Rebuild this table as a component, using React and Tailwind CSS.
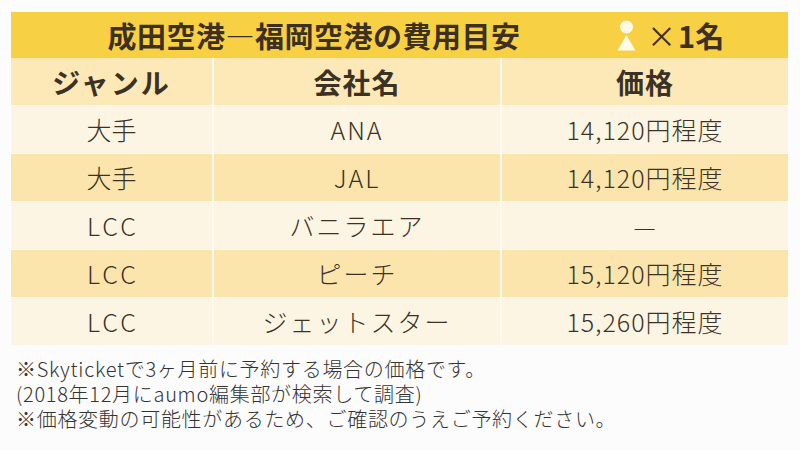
const rows = [
  { genre: '大手', company: 'ANA', price: '14,120円程度' },
  { genre: '大手', company: 'JAL', price: '14,120円程度' },
  { genre: 'LCC', company: 'バニラエア', price: '—' },
  { genre: 'LCC', company: 'ピーチ', price: '15,120円程度' },
  { genre: 'LCC', company: 'ジェットスター', price: '15,260円程度' },
];

const notes = [
  '※Skyticketで3ヶ月前に予約する場合の価格です。',
  '(2018年12月にaumo編集部が検索して調査)',
  '※価格変動の可能性があるため、ご確認のうえご予約ください。',
];

const PersonIcon = () => (
  <svg width="20" height="32" viewBox="0 0 20 32">
    <circle cx="9.5" cy="7" r="6.5" fill="#fff9e6" />
    <path d="M9.5 15 L18.5 30.5 L0.5 30.5 Z" fill="#fffbea" />
  </svg>
);

const App = () => {
  return (
    <div
      className="w-[800px] h-[450px] bg-[#fdfcfd] overflow-hidden pt-[12px]"
      style={{ fontFamily: '"Noto Sans CJK JP", "Noto Sans", sans-serif' }}
    >
      <div className="mx-[11px] w-[777px]">
        {/* title bar */}
        <div className="h-[46px] bg-[#f8d044] flex items-center text-[#3d3020]">
          <div className="flex-1 text-center font-bold text-[29px] tracking-[0.5px] leading-none">
            成田空港―福岡空港の費用目安
          </div>
          <div className="w-[171px] flex items-center">
            <div className="mt-[2px]">
              <PersonIcon />
            </div>
            <span className="ml-[10px] text-[29px] leading-none font-normal">×</span>
            <span className="ml-[2px] text-[29px] leading-none font-bold">1名</span>
          </div>
        </div>

        {/* table */}
        <div className="grid grid-cols-[201px_1fr_1fr] gap-x-[2px] gap-y-[1px] bg-[#fffaf0] text-[#3b3225]">
          <div className="h-[47px] bg-[#fde9b7] flex items-center justify-center font-bold text-[28px] tracking-[2px]">ジャンル</div>
          <div className="h-[47px] bg-[#fde9b7] flex items-center justify-center font-bold text-[28px] tracking-[1px]">会社名</div>
          <div className="h-[47px] bg-[#fde9b7] flex items-center justify-center font-bold text-[28px] tracking-[1px]">価格</div>
          {rows.map((r, i) => {
            const bg = i % 2 === 0 ? 'bg-[#fdf5e4]' : 'bg-[#fce5ad]';
            const genreTrack = r.genre === 'LCC' ? 'tracking-[3px] pl-[3px]' : '';
            return [
              <div key={`g${i}`} className={`h-[47px] ${bg} flex items-center justify-center text-[25px] font-light ${genreTrack}`}>{r.genre}</div>,
              <div key={`c${i}`} className={`h-[47px] ${bg} flex items-center justify-center text-[25px] font-light tracking-[2px]`}>{r.company}</div>,
              <div key={`p${i}`} className={`h-[47px] ${bg} flex items-center justify-center text-[25px] font-light tracking-[1px]`}>{r.price}</div>,
            ];
          })}
        </div>
      </div>

      {/* notes */}
      <div className="mt-[11px] pl-[16px] text-[20px] leading-[25px] tracking-[0.7px] text-[#333333] font-light">
        {notes.map((n) => (
          <div key={n}>{n}</div>
        ))}
      </div>
    </div>
  );
};

export default App;
